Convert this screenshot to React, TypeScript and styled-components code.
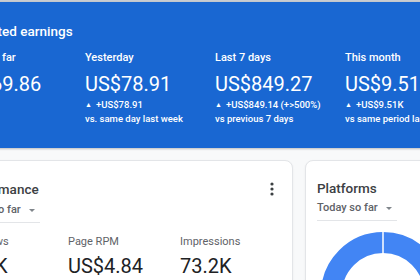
import React from 'react'
import styled, { createGlobalStyle } from 'styled-components'

const GlobalStyle = createGlobalStyle`
  html, body {
    margin: 0;
    padding: 0;
    width: 420px;
    height: 280px;
    overflow: hidden;
    background: #f8f9fa;
    font-family: Roboto, "Liberation Sans", Arial, sans-serif;
  }
`

interface IEarning {
  label: string
  value: string
  delta?: string
  compare?: string
}

const earnings: IEarning[] = [
  { label: 'Today so far', value: 'US$69.86' },
  { label: 'Yesterday', value: 'US$78.91', delta: '+US$78.91', compare: 'vs. same day last week' },
  { label: 'Last 7 days', value: 'US$849.27', delta: '+US$849.14 (+>500%)', compare: 'vs previous 7 days' },
  { label: 'This month', value: 'US$9.51K', delta: '+US$9.51K', compare: 'vs same period last year' },
]

const metrics = [
  { label: 'Pageviews', value: '15.1K' },
  { label: 'Page RPM', value: 'US$4.84' },
  { label: 'Impressions', value: '73.2K' },
]

const App: React.FC = () => {
  return (
    <>
      <GlobalStyle />
      <Page>
        <TopStrip />
        <EarningsPanel>
          <PanelTitle>Estimated earnings</PanelTitle>
          <EarningsRow>
            {earnings.map((e) => (
              <EarningCol key={e.label}>
                <EarningLabel>{e.label}</EarningLabel>
                <EarningValue>{e.value}</EarningValue>
                {e.delta && (
                  <Delta>
                    <Arrow>▲</Arrow>
                    {e.delta}
                  </Delta>
                )}
                {e.compare && <Delta>{e.compare}</Delta>}
              </EarningCol>
            ))}
          </EarningsRow>
        </EarningsPanel>

        <CardsRow>
          <Card $width={349}>
            <CardHeader>
              <CardTitle>Performance</CardTitle>
              <Kebab width="20" height="20" viewBox="0 0 20 20">
                <circle cx="10" cy="5" r="1.6" />
                <circle cx="10" cy="10" r="1.6" />
                <circle cx="10" cy="15" r="1.6" />
              </Kebab>
            </CardHeader>
            <Dropdown>
              Today so far
              <Caret />
            </Dropdown>
            <MetricsRow>
              {metrics.map((m) => (
                <Metric key={m.label}>
                  <MetricLabel>{m.label}</MetricLabel>
                  <MetricValue>{m.value}</MetricValue>
                </Metric>
              ))}
            </MetricsRow>
          </Card>

          <Card $width={200}>
            <CardHeader>
              <CardTitle>Platforms</CardTitle>
            </CardHeader>
            <Dropdown>
              Today so far
              <Caret />
            </Dropdown>
            <Donut width="124" height="124" viewBox="0 0 124 124">
              <circle cx="62" cy="62" r="51.5" fill="none" stroke="#4285f4" strokeWidth="21" />
              <line x1="62" y1="0" x2="62" y2="22" stroke="#ffffff" strokeWidth="1.5" />
            </Donut>
          </Card>
        </CardsRow>
      </Page>
    </>
  )
}

export default App

const Page = styled.div`
  margin-left: -60px;
  width: 600px;
`

const TopStrip = styled.div`
  height: 2px;
  background: #c8ccd1;
`

const EarningsPanel = styled.div`
  height: 146px;
  box-sizing: border-box;
  padding: 21px 0 0 16px;
  background: #1967d2;
  color: #ffffff;
  box-shadow: 0 1px 2px rgba(0, 0, 0, 0.25);
`

const PanelTitle = styled.div`
  font-size: 13.5px;
  line-height: 16px;
  font-weight: 500;
`

const EarningsRow = styled.div`
  display: flex;
  margin-top: 12px;
  margin-left: -1px;
`

const EarningCol = styled.div`
  width: 130px;
  flex-shrink: 0;
`

const EarningLabel = styled.div`
  font-size: 11px;
  line-height: 14px;
  font-weight: 500;
`

const EarningValue = styled.div`
  margin-top: 7px;
  margin-bottom: 2px;
  font-size: 20px;
  line-height: 24px;
  font-weight: 400;
  white-space: nowrap;
`

const Delta = styled.div`
  font-size: 9.5px;
  line-height: 13px;
  font-weight: 500;
  white-space: nowrap;
`

const Arrow = styled.span`
  font-size: 7px;
  margin-right: 4px;
  vertical-align: 1px;
`

const CardsRow = styled.div`
  display: flex;
  gap: 12px;
  margin-top: 12px;
  padding-left: 4px;
`

const Card = styled.div<{ $width: number }>`
  width: ${(p) => p.$width}px;
  height: 160px;
  flex-shrink: 0;
  box-sizing: border-box;
  padding: 18px 10px 0 15px;
  background: #ffffff;
  border: 1px solid #e3e5e8;
  border-radius: 8px;
  box-shadow: 0 1px 2px rgba(60, 64, 67, 0.08);
  color: #202124;

  & + & {
    padding-left: 11px;
  }
`

const CardHeader = styled.div`
  display: flex;
  align-items: center;
  justify-content: space-between;
`

const CardTitle = styled.div`
  font-size: 13.5px;
  line-height: 18px;
  font-weight: 500;
  color: #3c4043;
`

const Kebab = styled.svg`
  fill: #3c4043;
`

const Dropdown = styled.div`
  display: flex;
  align-items: center;
  width: 80px;
  margin-top: 4px;
  padding-bottom: 5px;
  border-bottom: 1px solid #e3e5e8;
  font-size: 11px;
  line-height: 14px;
  font-weight: 500;
  color: #5f6368;
  white-space: nowrap;
`

const Caret = styled.span`
  margin-left: 8px;
  border-left: 3.5px solid transparent;
  border-right: 3.5px solid transparent;
  border-top: 3.5px solid #80868b;
`

const MetricsRow = styled.div`
  display: flex;
  margin-top: 12px;
  margin-left: -4px;
`

const Metric = styled.div`
  width: 112px;
  flex-shrink: 0;
`

const MetricLabel = styled.div`
  font-size: 11px;
  line-height: 14px;
  color: #5f6368;
`

const MetricValue = styled.div`
  margin-top: 5px;
  font-size: 20px;
  line-height: 24px;
  color: #202124;
  white-space: nowrap;
`

const Donut = styled.svg`
  display: block;
  margin-top: 11px;
  margin-left: 4px;
`
